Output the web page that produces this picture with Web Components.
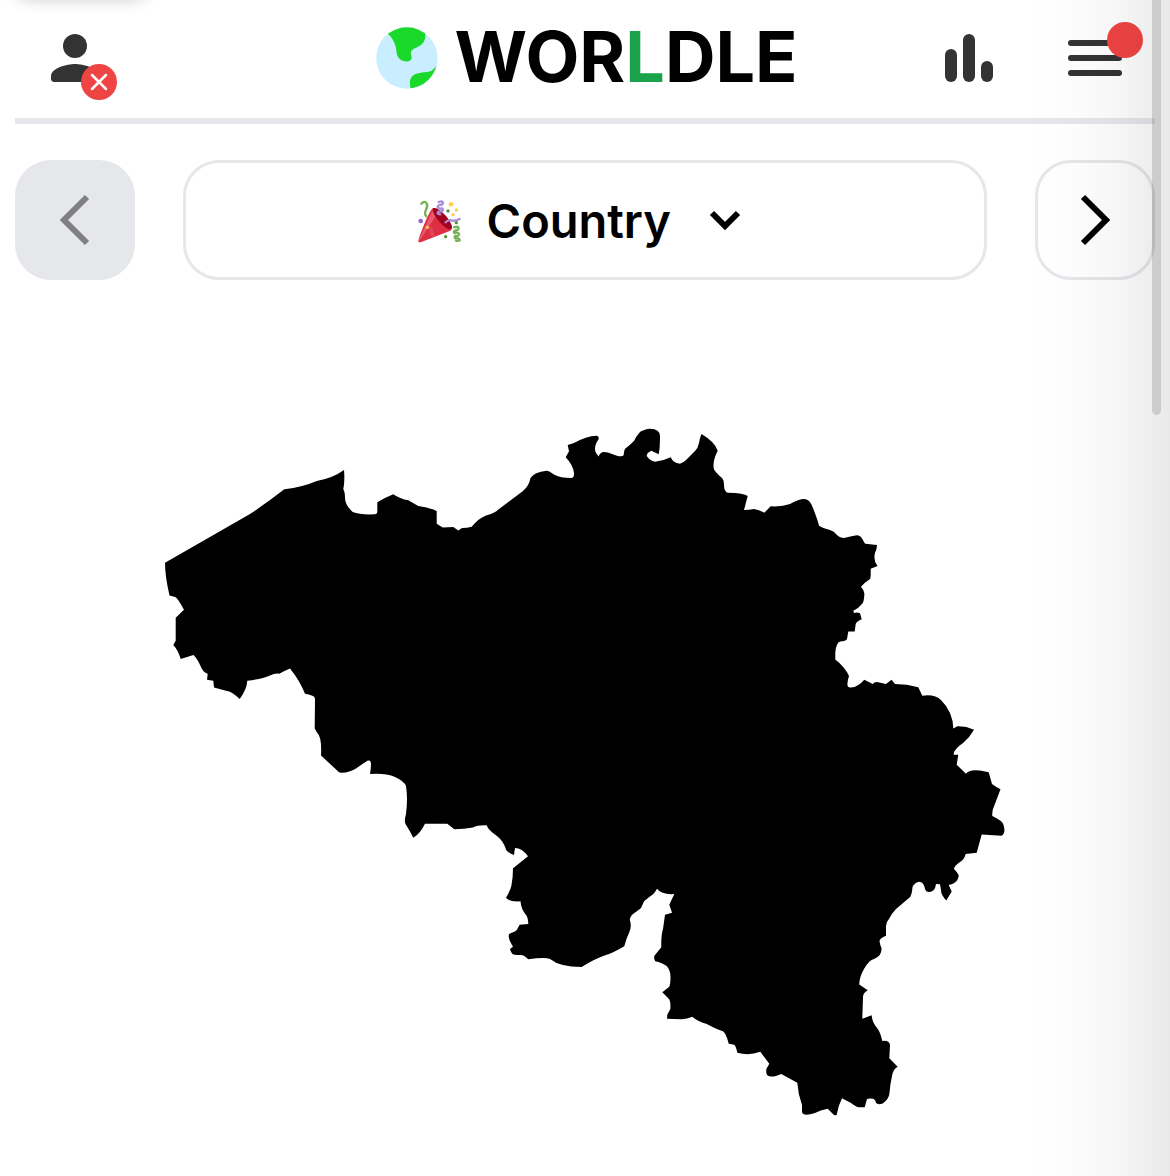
<!DOCTYPE html>
<html lang="en">
<head>
<meta charset="utf-8">
<meta name="viewport" content="width=device-width, initial-scale=1">
<title>Worldle</title>
<style>
  html, body { margin: 0; background: #fff; }
  body { font-family: Inter, "Liberation Sans", sans-serif; color: #000; }
</style>
</head>
<body>
<worldle-app></worldle-app>

<template id="app-tpl">
  <style>
    :host { display: block; position: relative; min-height: 100vh; box-sizing: border-box; padding: 0 15px; overflow: hidden; }
    main { display: flex; flex-direction: column; gap: 40px; padding-top: 36px; }
    .toast { position: absolute; left: 15px; top: -62px; width: 132px; height: 56px; border-radius: 12px; background: #fff; box-shadow: 0 4px 16px rgba(0,0,0,.24); }
    .edge { position: absolute; inset: 0 0 0 auto; width: 150px; pointer-events: none; background: linear-gradient(to right, rgba(0,0,0,0), rgba(0,0,0,.008) 30%, rgba(0,0,0,.03) 62%, rgba(0,0,0,.085)); }
    .thumb { position: absolute; top: -12px; right: 9px; width: 9px; height: 427px; border-radius: 5px; background: rgba(0,0,0,.135); pointer-events: none; }
  </style>
  <div class="toast"></div>
  <site-header></site-header>
  <main>
    <mode-nav></mode-nav>
    <country-shape></country-shape>
  </main>
  <div class="edge"></div>
  <div class="thumb"></div>
</template>

<template id="header-tpl">
  <style>
    :host { display: block; border-bottom: 6px solid #e5e7eb; }
    header { display: grid; grid-template-columns: 1fr auto 1fr; align-items: center; padding: 22px 0 24px; }
    .right { display: flex; justify-content: flex-end; gap: 6px; }
    .brand { display: flex; align-items: center; gap: 16px; padding-left: 4px; }
    .globe { width: 62px; height: 62px; display: block; }
    h1 { margin: 0; font-size: 70px; line-height: 70px; padding-bottom: 2px; font-weight: 700; }
    h1 span { color: #1aa34a; }
  </style>
  <header>
    <div class="left">
      <icon-button label="Account">
        <svg viewBox="0 0 24 24" width="72" height="72" fill="#333"><circle cx="12" cy="8" r="4"/><path d="M12 14c-2.67 0-8 1.34-8 4v1c0 .55.45 1 1 1h14c.55 0 1-.45 1-1v-1c0-2.660-5.330-4-8-4z"/></svg>
        <svg slot="badge" class="low" viewBox="0 0 36 36" width="36" height="36"><circle cx="18" cy="18" r="18" fill="#ef4444"/><path d="M11 11l14 14M25 11L11 25" stroke="#fff" stroke-width="2.500" stroke-linecap="round"/></svg>
      </icon-button>
    </div>
    <div class="brand">
      <svg class="globe" viewBox="50 81 183 184">
        <defs><clipPath id="disc"><circle cx="141" cy="173" r="91"/></clipPath></defs>
        <circle cx="141" cy="173" r="91" fill="#c8eeff"/>
        <g clip-path="url(#disc)" fill="#1bd92b">
          <path d="M76 96C95 106 103 123 107 137C112 152 108 164 119 175C128 184 143 185 150 181C161 174 150 162 154 154C159 141 180 143 190 127C198 114 199 98 188 92L160 70L90 75Z"/>
          <path d="M240 183C226 198 222 209 206 214C190 217 168 216 157 227C147 238 150 250 153 270L240 270Z"/>
        </g>
      </svg>
      <h1>WOR<span>L</span>DLE</h1>
    </div>
    <div class="right">
      <icon-button label="Statistics">
        <svg viewBox="0 0 24 24" width="72" height="72" fill="#333"><rect x="4" y="9" width="4" height="11" rx="2"/><rect x="10" y="4" width="4" height="16" rx="2"/><rect x="16" y="13" width="4" height="7" rx="2"/></svg>
      </icon-button>
      <icon-button label="Menu">
        <svg viewBox="0 0 24 24" width="72" height="72" fill="#333"><rect x="3" y="6" width="18" height="2" rx="1"/><rect x="3" y="11" width="18" height="2" rx="1"/><rect x="3" y="16" width="18" height="2" rx="1"/></svg>
        <svg slot="badge" class="high" viewBox="0 0 36 36" width="36" height="36"><circle cx="18" cy="18" r="18" fill="#f14444"/></svg>
      </icon-button>
    </div>
  </header>
</template>

<template id="icon-button-tpl">
  <style>
    :host { display: block; width: 120px; }
    button { display: flex; justify-content: center; position: relative; width: 100%; padding: 0; border: 0; background: none; cursor: pointer; }
    ::slotted(svg) { display: block; }
    ::slotted(.low) { position: absolute; left: 66px; top: 42px; }
    ::slotted(.high) { position: absolute; left: 72px; top: 0; }
  </style>
  <button type="button"><slot></slot><slot name="badge"></slot></button>
</template>

<template id="nav-tpl">
  <style>
    :host { display: block; }
    nav { display: flex; gap: 48px; }
    button, .picker { box-sizing: border-box; height: 120px; border: 3px solid #e5e7eb; border-radius: 36px; background: transparent; }
    button { flex: 0 0 120px; display: grid; place-items: center; padding: 0; color: #000; cursor: pointer; }
    button:disabled { background: #e5e7eb; color: #808080; cursor: default; }
    svg { display: block; flex: none; fill: none; stroke: currentColor; }
    .picker { flex: 1; display: flex; align-items: center; justify-content: center; gap: 24px; padding-top: 2px; cursor: pointer; }
    select { appearance: none; border: 0; margin: 0; padding: 0; background: none; color: inherit; font: 600 47px/60px Inter, "Liberation Sans", sans-serif; outline: 0; cursor: pointer; }
    .party { stroke: none; }
  </style>
  <nav>
    <button type="button" disabled aria-label="Previous round">
      <svg viewBox="0 0 60 60" width="60" height="60" stroke-width="6"><path d="M42 7L19 30L42 53"/></svg>
    </button>
    <label class="picker" for="mode">
      <svg class="party" viewBox="47 51 144 144" width="48" height="48">
        <path fill="#dd2e44" d="M103 84C92 82 57 176 57 184Q59 189 66 186L153 152Q163 145 154 132C145 112 124 88 103 84Z"/>
        <path fill="#ea596e" d="M101 88L57 184Q61 184 64 177L108 110Z"/>
        <path fill="#a0041e" d="M103 84C96 87 103 106 119 124C133 141 149 151 156 147C162 141 153 124 140 108C127 93 112 82 103 84Z"/>
        <path fill="#ea596e" d="M98 138Q101 155 107 168L98 171Q88 158 89 142Z" opacity=".5"/>
        <g fill="none" stroke-width="7" stroke-linecap="round">
          <path stroke="#77b255" d="M66 71Q76 61 82 70Q86 79 80 90T81 109"/>
          <path stroke="#aa8dd8" d="M118 66Q129 61 131 68Q130 76 120 75Q113 77 116 83Q120 87 128 85Q134 89 127 94Q115 93 115 100Q119 103 123 103"/>
          <path stroke="#aa8dd8" d="M139 127Q148 117 158 122Q169 123 181 117"/>
          <path stroke="#77b255" d="M164 142Q176 138 178 144Q178 150 169 151Q161 153 165 159Q179 156 179 163Q178 169 168 168Q163 171 168 175Q179 173 181 181Q176 184 170 182"/>
        </g>
        <g fill="#ffcc4d"><circle cx="155" cy="73" r="7"/><circle cx="171" cy="90" r="5"/><circle cx="161" cy="104" r="5"/><circle cx="84" cy="142" r="5"/></g>
        <g fill="#5c913b"><circle cx="146" cy="93" r="5"/><circle cx="171" cy="128" r="5"/><circle cx="139" cy="170" r="5"/></g>
        <circle cx="64" cy="123" r="7" fill="#9266cc"/>
      </svg>
      <select id="mode" aria-label="Round"><option>Country</option></select>
      <svg viewBox="0 0 60 60" width="60" height="60" stroke-width="6"><path d="M16 22L29 35L42 22"/></svg>
    </label>
    <button type="button" aria-label="Next round">
      <svg viewBox="0 0 60 60" width="60" height="60" stroke-width="6"><path d="M18 7L41 30L18 53"/></svg>
    </button>
  </nav>
</template>

<template id="shape-tpl">
  <style>
    :host { display: block; }
    svg { display: block; width: 100%; height: auto; }
  </style>
  <svg viewBox="15 320 1140 856" role="img" aria-label="Silhouette of the country to guess">
    <path d="M165 562.700L250 514Q268 502 284.300 489.300Q303 487 316.700 481Q333 478 344 470Q345 481 343.300 489.300Q345 492 345 498Q345 505 352.700 512Q360 515 375 514.300Q377.300 514 377.300 512V502.300Q384 498 393.300 494.300Q400 499 408.300 500.300L418.300 506Q428 507 436.700 511V523.700L442.700 527.500L453.300 527L458.300 530.500L462 528Q467 528 471.700 526.700Q479 518 486 515.500Q495 513 499 509L510 500.700L523 491Q529 486 530.500 478Q534 472 546.700 470.700Q549 471 554 474.500Q560 478 571.700 478Q574.500 477 574 473Q573 465 565.700 457.300L569 451.300L567.700 445L574 443Q586 436 596.700 435.700Q599 436 598.700 439Q593 447 596 453L598.700 456.500Q600 452 604 452Q608 452 612 454Q622 458 623.700 455Q624 449 626 448Q630 445 634 441Q639 431 643 430.500Q647 428.500 650 428.700Q660 429 660 436Q660 448 658.700 454.300L651.300 450.700Q646.500 453 646.700 456Q650 461 655 461.700Q663 461 670.700 457.300Q673 463 680 463.700Q683 463 686 460L695 451Q698 448 699 443Q700 437 701.500 434Q715 442 717.700 450.700Q712 462 714 469.500Q716 473 722 478Q724 480 724 485Q724 492 728 492.700Q744 493 747.700 496L744 510Q749 510 754 509Q759 510 764.300 512.700L770.700 506.300Q782 507 790 504Q799 499 804 499Q810 499 813 508Q818 521 819 525.700Q824 529 830 530Q834 531 837 535Q841 539 845 537.700Q855 535 858 535.200Q861 536 863 540Q864 543 865.300 543.700L877 545Q877 549 875 553Q873 560 877.500 566L870.700 568.700Q871 577 870 579Q864 583 861 586.700Q865 591 864.300 595Q864 602 862 604Q859 608 853.300 610.700L854 613Q857 612 860 613.300L861.700 619.300Q856 622 855.700 624L854.700 631.500H848.300L847 639Q846 641 840 641.500Q836 643 835.300 653V659.500Q845 667 849 676Q847 682 847.500 685.500Q848 688 851 687.500Q858 687 864.300 679.700L872.700 684Q874 682 877 682L886 684L891.500 679.700L895 684Q907 684 918.300 687.300L922.300 695.700Q935 694 941 700Q953 712 953.300 728.500L957.300 726.300Q966 726 974 729.700Q970 737 963 743Q953 750 953.700 754.700H958.300L956.700 764.700L966 773.700Q969 769 980 770.500L988.700 772.300L992 784Q996 787 1000.500 789.300L993 809Q992 812 992.300 816Q1003 821 1003.500 825Q1006 833 1001.700 835.700L981.700 834.500L976.700 852.700L965.700 854Q964 860 960 862Q954 866 954 869Q959 874 958.700 876.500Q957 884 948.700 885L951.700 891.500L946.300 900.500Q941 895 941 890L940 884.300L936 884Q935 892 929 892Q926 892 925 889Q924 882 919 881.700Q914 883 912.500 887Q912 896 909 898L896 909Q892 913 889 919Q886 922 886 926V935.700Q880 938 879.500 941Q880 945 881.500 948Q882 956 874 959Q869 960 864 969Q859 978 859.300 984.500L867.700 990.300Q863 993 863 997L862.300 1018.700L871.700 1015.300Q872 1022 877 1028Q880 1031 882.300 1041Q889 1040 890 1045L889.300 1058.300L897.700 1066.700Q893 1069 892 1076Q890 1085 889.500 1093Q889 1099 882.700 1103.500Q878 1105 876 1103Q876 1100 873.300 1098.700Q869 1098 867 1099L864.700 1107.300H859Q856 1107 851 1103L842 1098.300Q838 1106 836.700 1115Q834 1116 832 1113L827.700 1108.700Q820 1110 815 1113Q803 1117 802 1112V1105Q798 1094 797.300 1082.700L781.300 1074L776 1076Q767 1078 766.300 1073V1069L769.300 1063.700L760.300 1051.700Q749 1056 737.300 1052.700Q736 1046 734.300 1044.700L728.700 1043.700Q726 1033 723 1031.300Q718 1030 706.700 1024Q697 1021 692.300 1016.700Q687 1019 681.700 1019.300L667 1018.700L667.300 1014.700L670.300 1009Q671 1001 668.500 998.500L662.300 992.300L669.300 986.700Q671 983 670.300 974Q669 967 665 965Q658 961 655.500 961.500Q653 958 655 955L661.300 947.300Q661 935 663 929L665 914.700L672 912.700L669.300 904.700L674.300 894Q662 895 657 888.700Q654 894 652 895Q645 900 644 901.500L641 908Q640 909 633 914Q629 917 630 920.500Q632 927 629 933Q626 939 624.300 946.300Q613 953 606 955Q594 959 581.700 967Q560 967 550 959Q545 957 528.300 959.300Q524 955 521 955Q513 955 512 953.500Q510 950 510 949L513 946.700Q509 940 509 938Q508 934 510 933.500Q517 931 517.300 929L519.700 924.700L528.300 924Q528 917 526 915Q521 909 520.500 901.300Q509 902 506 897.700Q511 889 511.500 885Q513 877 513 868.300L528 856.300Q522 848 515 848L514 855Q506 852 505.500 848Q503 841 497 836Q488 830 486.700 825.300Q477 825 473 827.500Q464 829 454.300 829.300L447.300 823.700H425Q420 834 413.300 837.700L410 831.500L405.500 824Q404 821 406 814Q408 798 406 786Q404 781 395 777Q386 773 370 774Q371.500 765 370.700 762Q370 760 367.300 760.700Q361 765 356 768.500Q348 773.500 339.300 772.500L321 755.500Q322 737 317 732.500L314.700 728.500L315 700Q315 696 312.300 695.700Q309 694 305 693.700Q300 681 290 668.500Q284 671 279.300 673.700Q275 673 270 675.500Q262 679 247.300 680.700Q247 689 239.700 699Q231 691 227 691L214 687.500L213.300 680.700L207 679.700L207.700 673.700Q203 672 201.500 668Q197 658 193.500 655L180.700 659Q178 650 173.300 645L175.700 640.700V617.700L184 609.700Q177 597 175 597L169.500 595.500Q165 576 165 562.700Z"/>
  </svg>
</template>

<script>
  class TemplateElement extends HTMLElement {
    constructor() {
      super();
      const tpl = document.getElementById(this.constructor.template);
      this.attachShadow({ mode: "open" }).append(tpl.content.cloneNode(true));
    }
  }
  class IconButton extends TemplateElement {
    static template = "icon-button-tpl";
    connectedCallback() {
      this.shadowRoot.querySelector("button").setAttribute("aria-label", this.getAttribute("label"));
    }
  }
  class ModeNav extends TemplateElement { static template = "nav-tpl"; }
  class CountryShape extends TemplateElement { static template = "shape-tpl"; }
  class SiteHeader extends TemplateElement { static template = "header-tpl"; }
  class WorldleApp extends TemplateElement { static template = "app-tpl"; }
  customElements.define("icon-button", IconButton);
  customElements.define("mode-nav", ModeNav);
  customElements.define("country-shape", CountryShape);
  customElements.define("site-header", SiteHeader);
  customElements.define("worldle-app", WorldleApp);
</script>
</body>
</html>
